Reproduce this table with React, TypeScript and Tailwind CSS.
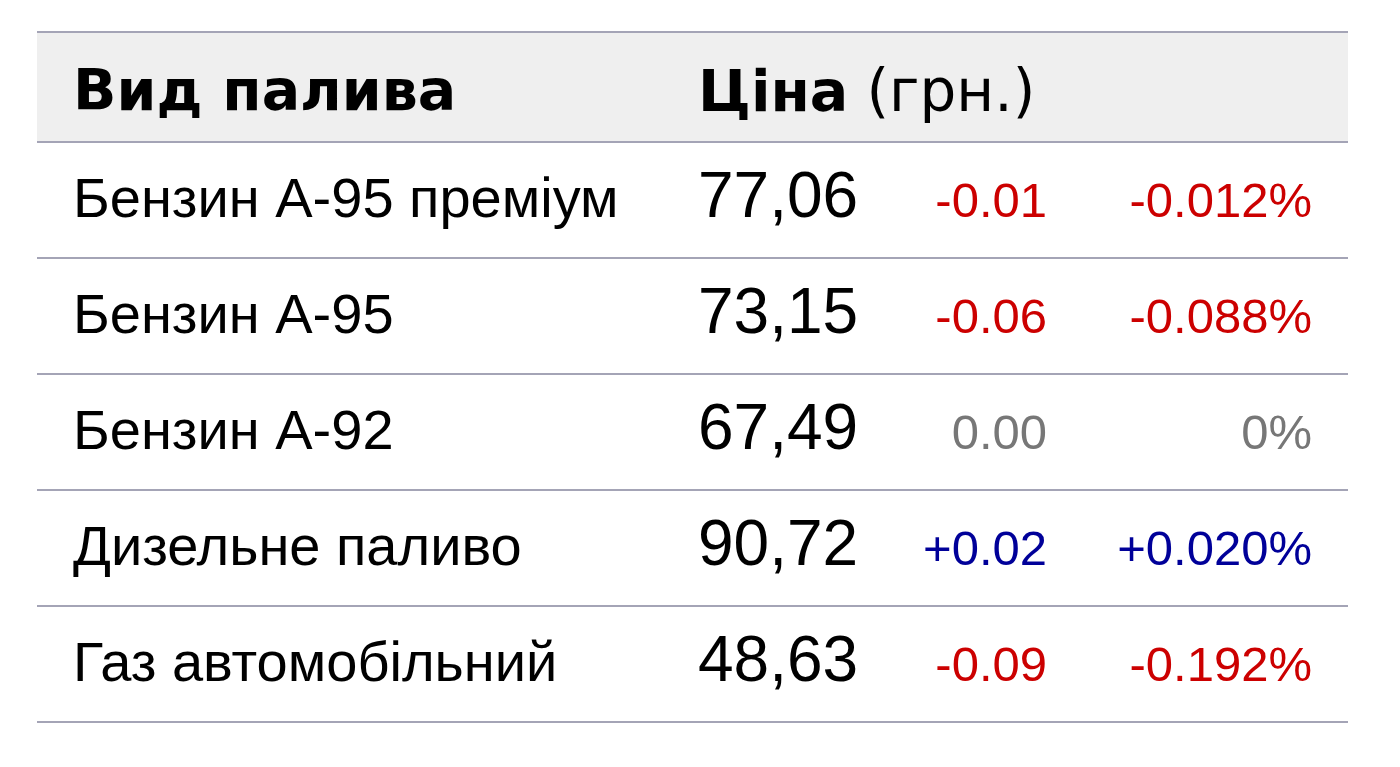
import React from 'react';

type Row = { name: string; price: string; diff: string; pct: string; dir: 'down' | 'up' | 'flat' };

const rows: Row[] = [
  { name: 'Бензин А-95 преміум', price: '77,06', diff: '-0.01', pct: '-0.012%', dir: 'down' },
  { name: 'Бензин А-95', price: '73,15', diff: '-0.06', pct: '-0.088%', dir: 'down' },
  { name: 'Бензин А-92', price: '67,49', diff: '0.00', pct: '0%', dir: 'flat' },
  { name: 'Дизельне паливо', price: '90,72', diff: '+0.02', pct: '+0.020%', dir: 'up' },
  { name: 'Газ автомобільний', price: '48,63', diff: '-0.09', pct: '-0.192%', dir: 'down' },
];

const colorFor = (dir: Row['dir']) =>
  dir === 'down' ? 'text-[#cc0000]' : dir === 'up' ? 'text-[#000099]' : 'text-[#777777]';

const App: React.FC = () => {
  return (
    <div className="min-h-screen bg-white pt-[31px] pl-[37px]">
      <table className="w-[1311px] table-fixed border-collapse font-['Liberation_Sans',Arial,sans-serif] text-black">
        <colgroup>
          <col className="w-[653px]" />
          <col className="w-[180px]" />
          <col className="w-[210px]" />
          <col className="w-[268px]" />
        </colgroup>
        <thead>
          <tr className="h-[110px] border-y-2 border-[#a4a4b6] bg-[#efefef] font-['DejaVu_Sans',Verdana,sans-serif] leading-none">
            <th className="pl-[36px] pt-[29px] text-left align-top text-[57px] font-bold">Вид палива</th>
            <th colSpan={3} className="pl-[8px] pt-[29px] text-left align-top text-[57px] font-normal">
              <span className="font-bold">Ціна</span> <span className="text-[58px]">(грн.)</span>
            </th>
          </tr>
        </thead>
        <tbody>
          {rows.map((r) => (
            <tr key={r.name} className="h-[116px] border-b-2 border-[#a4a4b6] leading-none">
              <td className="pl-[36px] align-baseline text-[56px] whitespace-nowrap">{r.name}</td>
              <td className="pl-[8px] pt-[20px] align-baseline text-[64px]">{r.price}</td>
              <td className={`pr-[33px] text-right align-baseline text-[49px] ${colorFor(r.dir)}`}>{r.diff}</td>
              <td className={`pr-[36px] text-right align-baseline text-[49px] ${colorFor(r.dir)}`}>{r.pct}</td>
            </tr>
          ))}
        </tbody>
      </table>
    </div>
  );
};

export default App;
